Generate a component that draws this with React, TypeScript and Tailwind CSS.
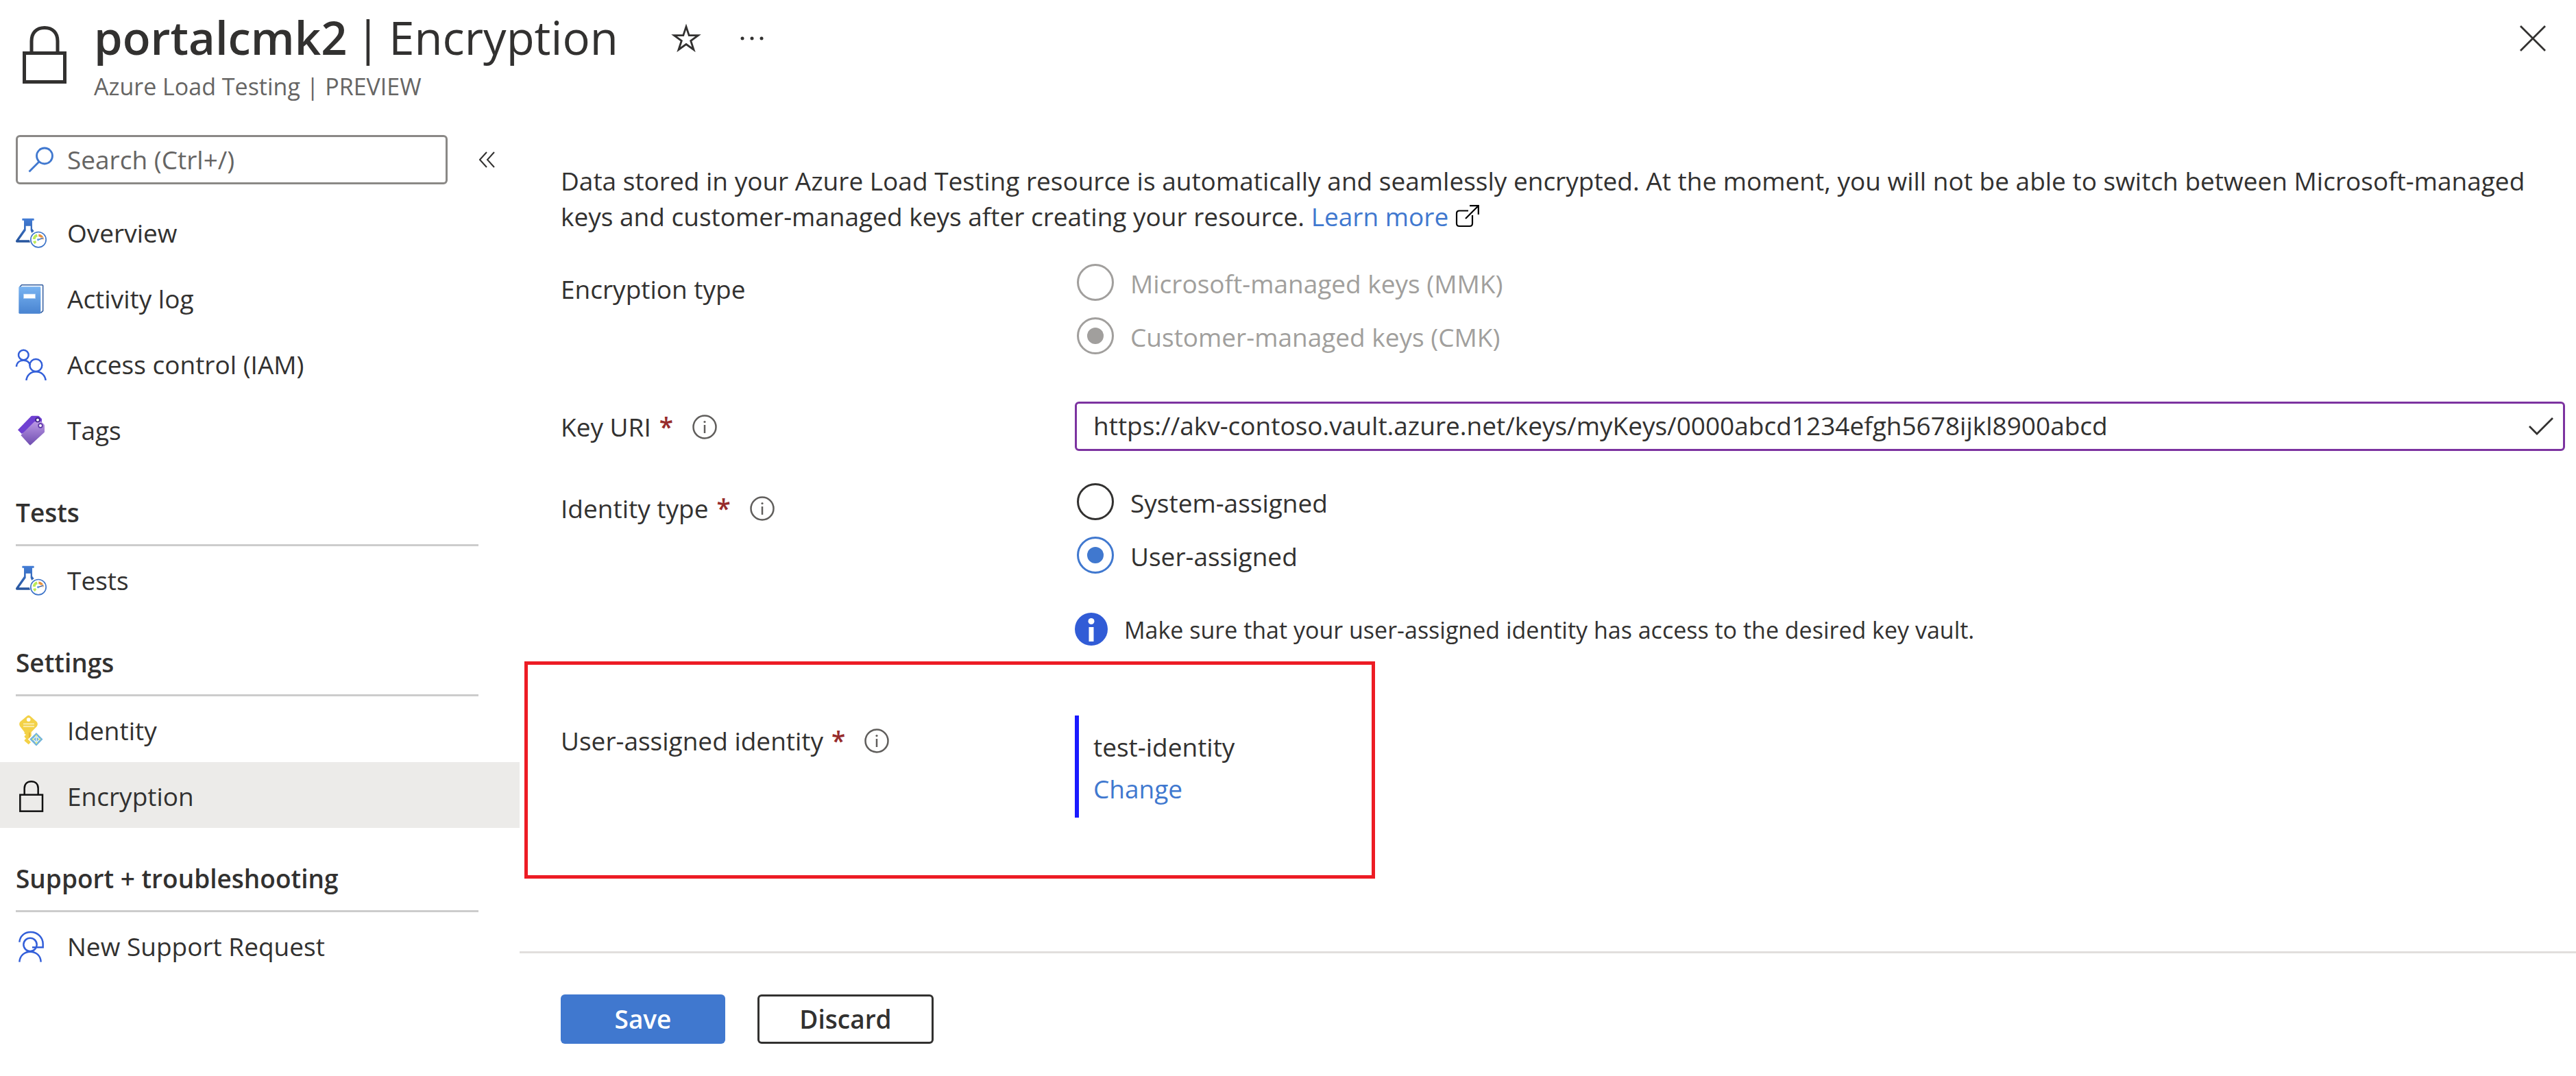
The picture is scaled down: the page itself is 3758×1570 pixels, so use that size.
import type { ReactNode } from "react";

const iconClass = "size-[46px] shrink-0";

function LoadTestIcon() {
  return (
    <svg className={iconClass} viewBox="66 49 138 138" fill="none" aria-hidden="true">
      <defs>
        <linearGradient id="flask" x1="0" y1="54" x2="0" y2="158" gradientUnits="userSpaceOnUse">
          <stop stopColor="#437dd6" />
          <stop offset="1" stopColor="#26549c" />
        </linearGradient>
      </defs>
      <path
        fill="url(#flask)"
        d="M99 54H147Q149 54 149 56V61Q149 63 147 63H141V99L149 110Q143 113 139 118L134 107V87H113V107L83 149H129Q130 154 132 159H73Q67 157 70 150L105 100V63H99Q97 63 97 61V56Q97 54 99 54Z"
      />
      <circle cx="168" cy="147" r="33.500" fill="#fff" stroke="#3d74c9" strokeWidth="5" />
      <path d="M149 145A19 19 0 0 1 163 128" stroke="#bdea58" strokeWidth="12" />
      <path d="M150 153A19 19 0 0 0 156 162" stroke="#bdea58" strokeWidth="12" />
      <path d="M169 128A19 19 0 0 1 187 146" stroke="#e8913c" strokeWidth="11" />
      <path d="M168 147L189 140" stroke="#fff" strokeWidth="9" />
      <path d="M168 147L189 140" stroke="#2f5592" strokeWidth="4" />
      <circle cx="167" cy="147" r="5" fill="#5f9be8" />
    </svg>
  );
}

function ActivityLogIcon() {
  return (
    <svg className={iconClass} viewBox="66 337 138 138" fill="none" aria-hidden="true">
      <defs>
        <linearGradient id="book" x1="0" y1="353" x2="0" y2="470" gradientUnits="userSpaceOnUse">
          <stop stopColor="#78b3f1" />
          <stop offset="1" stopColor="#4984d1" />
        </linearGradient>
      </defs>
      <path d="M86 354L95 345H185Q188 345 188 348V459L178 468" stroke="#315c9f" strokeWidth="4.500" />
      <rect x="82" y="353" width="96" height="118" rx="4" fill="url(#book)" />
      <rect x="103" y="385" width="52" height="19" fill="#fff" stroke="#a9cdf5" strokeWidth="2" />
    </svg>
  );
}

function AccessIcon() {
  return (
    <svg className={iconClass} viewBox="66 625 138 138" fill="none" stroke="#335fd9" strokeWidth="7.500" aria-hidden="true">
      <circle cx="103" cy="652" r="22" />
      <path d="M72 703C73 685 86 675 103 675C117 675 128 683 132 697" />
      <circle cx="157" cy="697" r="27" />
      <path d="M115 763C118 739 136 725 157 725C179 725 197 739 200 763" />
    </svg>
  );
}

function TagsIcon() {
  return (
    <svg className={iconClass} viewBox="66 913 138 138" fill="none" aria-hidden="true">
      <defs>
        <linearGradient id="tag" x1="0" y1="940" x2="0" y2="1047" gradientUnits="userSpaceOnUse">
          <stop stopColor="#bd9ae6" />
          <stop offset="1" stopColor="#6f4db0" />
        </linearGradient>
      </defs>
      <path fill="#6f40d2" d="M78 980L137 919Q139 918 142 918H166Q169 918 171 920L183 932V945L95 997Z" />
      <path fill="url(#tag)" d="M91 1003L149 945Q151 943 155 943H180L193 956Q195 958 195 961V987Q195 990 193 992L135 1045Q132 1048 129 1045Z" />
      <circle cx="165" cy="936" r="8.500" fill="#fff" stroke="#3e2188" strokeWidth="5" />
      <circle cx="177" cy="961" r="8.500" fill="#fff" stroke="#5a35a5" strokeWidth="5" />
    </svg>
  );
}

function IdentityIcon() {
  return (
    <svg className={iconClass} viewBox="66 7 138 138" fill="none" aria-hidden="true">
      <path
        fill="#f3d147"
        d="M118 12Q125 6 132 12L161 38Q168 47 161 58L137 83V125L125 137L107 121V117L114 111L107 104V100L114 94L107 90V83L88 58Q81 47 88 38Z"
      />
      <path d="M129 84V120" stroke="#e0a92f" strokeWidth="4" />
      <circle cx="125" cy="28" r="8.500" fill="#fff" />
      <path d="M102 47H150M102 58H150" stroke="#faeaa6" strokeWidth="6" />
      <path fill="#72b4dc" stroke="#fff" strokeWidth="5" d="M159 82L191 114L159 147L126 114Z" />
      <path d="M159 99L145 114L159 129L173 114Z M159 99V129" stroke="#fff" strokeWidth="3.500" />
      <g fill="#e4ef78">
        <circle cx="159" cy="99" r="4" />
        <circle cx="145" cy="114" r="4" />
        <circle cx="173" cy="114" r="4" />
        <circle cx="159" cy="129" r="4" />
      </g>
    </svg>
  );
}

function LockIcon() {
  return (
    <svg className={iconClass} viewBox="66 296 138 138" fill="none" stroke="#111" strokeWidth="7.500" aria-hidden="true">
      <rect x="88" y="358" width="98" height="72" />
      <path d="M107 358V330C107 311 119 300 137 300C155 300 167 311 167 330V358" />
    </svg>
  );
}

function SupportIcon() {
  return (
    <svg className={iconClass} viewBox="66 952 138 138" fill="none" stroke="#335fd9" strokeWidth="7.500" aria-hidden="true">
      <path d="M85 1002C87 976 107 958 134 958C165 958 188 981 188 1010V1025H141" />
      <circle cx="132" cy="1013" r="29" />
      <path d="M85 1089C87 1061 107 1044 132 1044C158 1044 178 1061 179 1089" />
    </svg>
  );
}

function NavItem({ icon, label, active = false }: { icon: ReactNode; label: string; active?: boolean }) {
  return (
    <li>
      <a
        href="#"
        aria-current={active ? "page" : undefined}
        className={
          active
            ? "flex h-24 items-center gap-[30px] bg-[#ecebe9] pt-1 pl-[22px]"
            : "flex h-24 items-center gap-[30px] pt-1 pl-[22px]"
        }
      >
        {icon}
        {label}
      </a>
    </li>
  );
}

function NavHeading({ children }: { children: ReactNode }) {
  return (
    <h2 className="mr-[60px] ml-[23px] border-b-3 border-[#cccccc] pt-12 pb-5 font-semibold">{children}</h2>
  );
}

function InfoButton({ label }: { label: string }) {
  return (
    <button type="button" aria-label={label} className="ml-7 size-9">
      <svg className="size-9" viewBox="0 0 36 36" fill="none" stroke="#605e5c" aria-hidden="true">
        <circle cx="18" cy="18" r="16.500" strokeWidth="2.500" />
        <path d="M18 15V27" strokeWidth="2.500" />
        <circle cx="18" cy="10.500" r="1.600" fill="#605e5c" stroke="none" />
      </svg>
    </button>
  );
}

function FieldLabel({ htmlFor, id, text, info }: { htmlFor?: string; id?: string; text: string; info?: boolean }) {
  return (
    <div className="flex w-[750px] shrink-0 items-center self-start pt-[11px]">
      {htmlFor ? <label htmlFor={htmlFor}>{text}</label> : <span id={id}>{text}</span>}
      {info && (
        <>
          <span className="ml-3 font-semibold text-[#962b2b]">*</span>
          <InfoButton label={`About ${text}`} />
        </>
      )}
    </div>
  );
}

function Radio({ name, label, checked = false, disabled = false }: { name: string; label: string; checked?: boolean; disabled?: boolean }) {
  return (
    <label className={disabled ? "flex h-[54px] items-center gap-6 text-[#a19f9d]" : "flex h-[54px] items-center gap-6"}>
      <input
        type="radio"
        name={name}
        defaultChecked={checked}
        disabled={disabled}
        className="grid size-[54px] shrink-0 appearance-none place-content-center rounded-full border-3 border-[#323130] before:size-6 before:rounded-full checked:border-[#4078cf] checked:before:bg-[#4078cf] disabled:border-[#a19f9d] disabled:checked:before:bg-[#a19f9d]"
      />
      <span className="pt-1">{label}</span>
    </label>
  );
}

export default function App() {
  return (
    <div className="min-h-screen bg-white font-['Open_Sans',sans-serif] text-[37px] leading-[52px] text-[#323130]">
      <header className="flex items-start pt-2 pb-[47px] pl-[33px]">
        <svg className="mt-[30px] h-[84px] w-16 shrink-0" viewBox="0 0 64 84" fill="none" stroke="#323130" strokeWidth="5" aria-hidden="true">
          <path d="M2.500 39.500H61.500V81.500H2.500Z" />
          <path d="M13 39V22C13 10 20 2.500 32 2.500S51 10 51 22V39" />
        </svg>
        <div className="ml-10">
          <div className="flex items-center">
            <h1 className="flex text-[67px] leading-[92px]">
              <span className="font-semibold">portalcmk2</span>
              <span className="mx-3">|</span>
              <span>Encryption</span>
            </h1>
            <button type="button" aria-label="Add to favorites" className="ml-[77px] size-11">
              <svg className="size-11" viewBox="0 0 44 44" fill="none" stroke="#323130" strokeWidth="2.800" aria-hidden="true">
                <path d="M22 7L26.200 19.600H39.500L28.700 27.500L33 40.500L22 32.500L11 40.500L15.300 27.500L4.500 19.600H17.800Z" />
              </svg>
            </button>
            <button type="button" aria-label="More actions" className="ml-[54px] h-11 w-10">
              <svg className="h-11 w-10" viewBox="0 0 40 44" fill="#323130" aria-hidden="true">
                <circle cx="6" cy="24" r="2.500" />
                <circle cx="20" cy="24" r="2.500" />
                <circle cx="34" cy="24" r="2.500" />
              </svg>
            </button>
          </div>
          <p className="mt-0.5 text-[34px] leading-12 text-[#666564]">Azure Load Testing | PREVIEW</p>
        </div>
        <button type="button" aria-label="Close" className="mt-7 mr-[43px] ml-auto size-10">
          <svg className="size-10" viewBox="0 0 40 40" stroke="#323130" strokeWidth="2.800" aria-hidden="true">
            <path d="M2 2L38 38M38 2L2 38" />
          </svg>
        </button>
      </header>

      <div className="flex">
        <nav className="w-[758px] shrink-0" aria-label="Resource menu">
          <div className="flex items-center pl-[23px]">
            <label className="flex h-[72px] w-[630px] items-center rounded-md border-3 border-[#8a8886] pl-[14px]">
              <svg className="size-10 shrink-0" viewBox="0 0 40 40" fill="none" stroke="#4078cf" strokeWidth="2.800" aria-hidden="true">
                <circle cx="25" cy="14.500" r="11.500" />
                <path d="M17 23L2.500 37.500" />
              </svg>
              <input
                type="text"
                aria-label="Search"
                placeholder="Search (Ctrl+/)"
                className="ml-[18px] min-w-0 flex-1 bg-transparent outline-none placeholder:text-[#666564]"
              />
            </label>
            <button type="button" aria-label="Collapse menu" className="ml-[46px] size-6">
              <svg className="size-6" viewBox="0 0 24 24" fill="none" stroke="#323130" strokeWidth="2" aria-hidden="true">
                <path d="M11 1L1 12L11 23M22 1L12 12L22 23" />
              </svg>
            </button>
          </div>
          <ul className="mt-[21px]">
            <NavItem icon={<LoadTestIcon />} label="Overview" />
            <NavItem icon={<ActivityLogIcon />} label="Activity log" />
            <NavItem icon={<AccessIcon />} label="Access control (IAM)" />
            <NavItem icon={<TagsIcon />} label="Tags" />
          </ul>
          <NavHeading>Tests</NavHeading>
          <ul>
            <NavItem icon={<LoadTestIcon />} label="Tests" />
          </ul>
          <NavHeading>Settings</NavHeading>
          <ul>
            <NavItem icon={<IdentityIcon />} label="Identity" />
            <NavItem icon={<LockIcon />} label="Encryption" active />
          </ul>
          <NavHeading>Support + troubleshooting</NavHeading>
          <ul>
            <NavItem icon={<SupportIcon />} label="New Support Request" />
          </ul>
        </nav>

        <main className="min-w-0 flex-1 pt-[41px]">
          <div className="pr-4 pl-[60px]">
            <p>
              Data stored in your Azure Load Testing resource is automatically and seamlessly encrypted. At the moment,
              you will not be able to switch between Microsoft-managed keys and customer-managed keys after creating
              your resource.{" "}
              <a href="#" className="text-[#4078cf]">
                Learn more
              </a>
              <svg className="ml-2.5 inline-block size-9 align-[-4px]" viewBox="0 0 36 36" fill="none" stroke="#000" strokeWidth="2.200" aria-hidden="true">
                <path d="M19 9.500H6Q2 9.500 2 13.500V28Q2 32 6 32H21Q25 32 25 28V16" />
                <path d="M15 21L33.500 2.500M21 2.200H33.800V15" />
              </svg>
            </p>

            <div className="mt-[43px] flex">
              <FieldLabel id="encryption-type" text="Encryption type" />
              <div role="radiogroup" aria-labelledby="encryption-type" className="flex flex-col gap-6 pl-[3px]">
                <Radio name="encryption" label="Microsoft-managed keys (MMK)" disabled />
                <Radio name="encryption" label="Customer-managed keys (CMK)" disabled checked />
              </div>
            </div>

            <div className="mt-[69px] flex">
              <FieldLabel htmlFor="key-uri" text="Key URI" info />
              <div className="flex h-[72px] flex-1 items-center rounded-md border-3 border-[#7c33a0] pr-[14px] pl-6">
                <input
                  id="key-uri"
                  type="text"
                  defaultValue="https://akv-contoso.vault.azure.net/keys/myKeys/0000abcd1234efgh5678ijkl8900abcd"
                  className="min-w-0 flex-1 bg-transparent pb-0.5 outline-none"
                />
                <svg className="h-7 w-9" viewBox="0 0 36 28" fill="none" stroke="#323130" strokeWidth="2.800" aria-hidden="true">
                  <path d="M1 14L12 25L35 2" />
                </svg>
              </div>
            </div>

            <div className="mt-[47px] flex">
              <FieldLabel id="identity-type" text="Identity type" info />
              <div className="flex flex-col">
                <div role="radiogroup" aria-labelledby="identity-type" className="flex flex-col gap-6 pl-[3px]">
                  <Radio name="identity" label="System-assigned" />
                  <Radio name="identity" label="User-assigned" checked />
                </div>
                <div className="mt-[57px] flex h-12 items-center gap-6 text-[34px]">
                  <svg className="size-12 shrink-0" viewBox="0 0 48 48" aria-hidden="true">
                    <circle cx="24" cy="24" r="24" fill="#315cd6" />
                    <circle cx="24" cy="12.500" r="4.500" fill="#fff" />
                    <rect x="20.500" y="21" width="7" height="21" fill="#fff" />
                  </svg>
                  <p className="pt-0.5">Make sure that your user-assigned identity has access to the desired key vault.</p>
                </div>
              </div>
            </div>

            <div className="mt-[23px] -ml-[53px] flex w-[1241px] border-5 border-[#ed1c24] pt-[74px] pb-[84px] pl-12">
              <FieldLabel id="user-identity" text="User-assigned identity" info />
              <div aria-labelledby="user-identity" className="flex flex-col items-start gap-[9px] border-l-6 border-[#1a1aff] pt-5 pb-4 pl-[21px]">
                <span>test-identity</span>
                <a href="#" className="text-[#4078cf]">
                  Change
                </a>
              </div>
            </div>
          </div>

          <footer className="mt-[106px] flex gap-[47px] border-t-3 border-[#e1dfdd] pt-[60px] pl-[60px] font-semibold">
            <button type="button" className="h-[72px] w-60 rounded-md bg-[#4078cf] text-white">
              Save
            </button>
            <button type="button" className="h-[72px] w-[257px] rounded-md border-3 border-[#323130]">
              Discard
            </button>
          </footer>
        </main>
      </div>
    </div>
  );
}
